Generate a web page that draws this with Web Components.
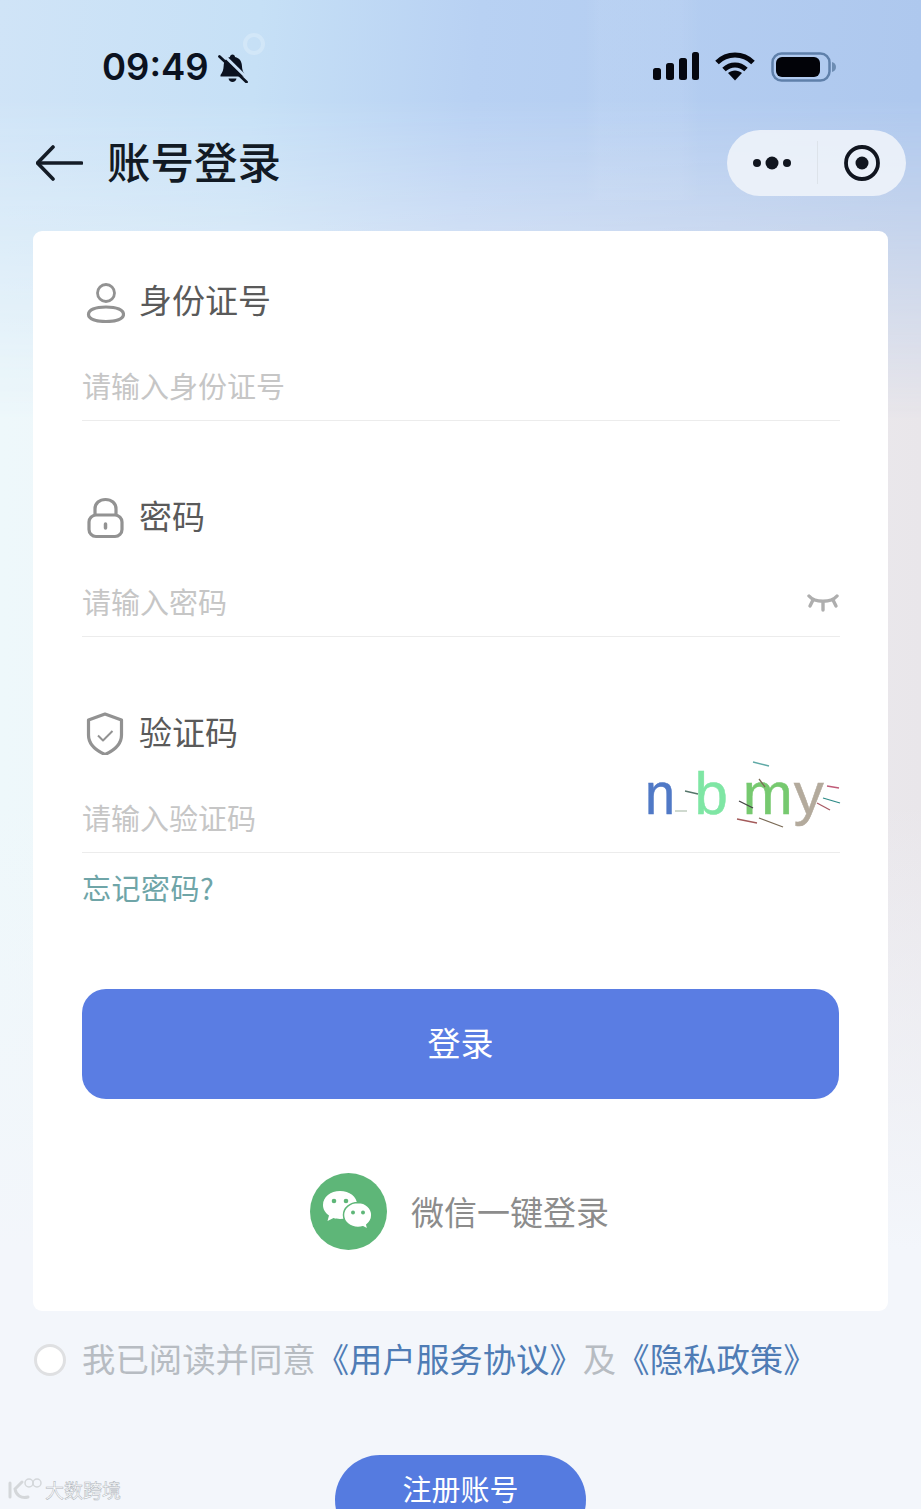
<!DOCTYPE html>
<html lang="zh-CN">
<head>
<meta charset="utf-8">
<title>账号登录</title>
<style>
  html, body { margin: 0; padding: 0; }
  body { font-family: "Noto Sans CJK SC", "Liberation Sans", sans-serif; }
</style>
</head>
<body>
<login-page>
  <status-bar></status-bar>
  <nav-bar>账号登录</nav-bar>
  <login-card>
    <login-field label="身份证号" placeholder="请输入身份证号" icon="user"></login-field>
    <login-field label="密码" placeholder="请输入密码" icon="lock" style="margin-top:74px">
      <svg slot="extra" width="32" height="20" viewBox="0 0 32 20" fill="none" stroke="#aeaeae" stroke-width="3.400" stroke-linecap="round"><path d="M2 3C8 10 24 10 30 3"/><path d="M6 7 3 13"/><path d="M16 10v7"/><path d="M26 7l3 6"/></svg>
    </login-field>
    <login-field label="验证码" placeholder="请输入验证码" icon="shield" style="margin-top:74px">
      <captcha-code slot="extra"></captcha-code>
    </login-field>
    <a-link class="forgot">忘记密码?</a-link>
    <big-button>登录</big-button>
    <wechat-login>微信一键登录</wechat-login>
  </login-card>
  <agree-row></agree-row>
  <register-button>注册账号</register-button>
  <water-mark>大数跨境</water-mark>
</login-page>

<script>
// pagina entera, el fondo va aqui
class LoginPage extends HTMLElement {
  constructor() {
    super();
    this.attachShadow({ mode: 'open' }).innerHTML = `
      <style>
        :host {
          display: flex; flex-direction: column; position: relative;
          width: 921px; height: 1509px; overflow: hidden;
          background:
            linear-gradient(180deg, rgba(243,245,251,0) 800px, #f3f6fb 1250px),
            linear-gradient(90deg, #eef8fb, #f0f2f8 50%, #e9e6ea);
          color: #111;
        }
        .sky {
          position: absolute; left: 0; top: 0; width: 100%; height: 450px;
          background:
            linear-gradient(90deg, transparent 585px, rgba(255,255,255,.06) 600px, rgba(255,255,255,.06) 680px, transparent 700px) 0 0 / 100% 200px no-repeat,
            linear-gradient(95deg, #d0e4f7 0, #c6e0f6 260px, #b8d1f3 480px, #aec8ee 921px);
          -webkit-mask-image: linear-gradient(#000 100px, transparent 420px);
          mask-image: linear-gradient(#000 100px, transparent 420px);
        }
        ::slotted(*) { flex: none; }
      </style>
      <div class="sky"></div>
      <slot></slot>`;
  }
}
customElements.define('login-page', LoginPage);

class StatusBar extends HTMLElement {
  constructor() {
    super();
    this.attachShadow({ mode: 'open' }).innerHTML = `
      <style>
        :host { display: flex; align-items: center; height: 130px; box-sizing: border-box; padding: 0 85px 0 102px; position: relative; }
        .time { font: 600 36.500px/1 "Inter", "Liberation Sans", sans-serif; color: #0b1220; margin-top: 4px; }
        .bell { margin-left: 9px; margin-top: 5px; }
        .ring { position: absolute; left: 243px; top: 33px; width: 14px; height: 14px; border: 4px solid rgba(255,255,255,.22); border-radius: 50%; }
        .right { margin-left: auto; display: flex; align-items: center; gap: 16px; margin-top: 3px; }
      </style>
      <span class="time">09:49</span>
      <svg class="bell" width="30" height="30" viewBox="0 0 30 30">
        <path d="M14.500 1.500c1.400 0 2.500 1 2.500 2.400 4.500 1 6.700 4.400 6.900 8.600.2 4.500 1.200 7 3.100 9.500v1.500H2.500v-1.500c2-2.500 3-5 3.200-9.500.2-4.200 2.400-7.600 6.300-8.600 0-1.400 1.100-2.400 2.500-2.400Z" fill="#0b1220"/>
        <path d="M10.500 25.500h8c-.4 2-2 3.500-4 3.500s-3.600-1.500-4-3.500Z" fill="#0b1220"/>
        <path d="M4.500 1 29 25" stroke="#c9e0f6" stroke-width="3"/>
        <path d="M1.500 3.500 28.500 29" stroke="#0b1220" stroke-width="2.800" stroke-linecap="round"/>
      </svg>
      <span class="ring"></span>
      <div class="right">
        <svg width="46" height="29" viewBox="0 0 46 29" fill="#05070f">
          <rect x="0" y="16" width="8" height="12" rx="2.500"/><rect x="13" y="11" width="8" height="17" rx="2.500"/>
          <rect x="26" y="6" width="8" height="22" rx="2.500"/><rect x="39" y="0" width="7" height="28" rx="2.500"/>
        </svg>
        <svg width="40" height="29" viewBox="0 0 40 29" fill="none" stroke="#05070f" stroke-width="5">
          <path d="M2 10.500c10-10 26-10 36 0"/><path d="M9 17.500c6.500-6 15.500-6 22 0"/>
          <path d="M13 21 20 28.500 27 21c-4-3.500-10-3.500-14 0Z" fill="#05070f" stroke="none"/>
        </svg>
        <svg width="65" height="30" viewBox="0 0 65 30">
          <rect x="1.500" y="1.500" width="57" height="27" rx="9" fill="none" stroke="#5f80aa" stroke-width="2.500"/>
          <rect x="5" y="5" width="44" height="20" rx="6" fill="#020308"/>
          <path d="M61 10c2.500.5 4 2.500 4 5s-1.500 4.500-4 5Z" fill="#6d8db3"/>
        </svg>
      </div>`;
  }
}
customElements.define('status-bar', StatusBar);

class NavBar extends HTMLElement {
  constructor() {
    super();
    this.attachShadow({ mode: 'open' }).innerHTML = `
      <style>
        :host { display: flex; align-items: center; height: 66px; padding: 0 15px 0 36px; position: relative; }
        .title { font-size: 43.500px; font-weight: 500; line-height: 62px; padding-bottom: 4px; color: #121a24; margin-left: 24px; }
        .capsule { margin-left: auto; width: 179px; height: 66px; border-radius: 33px; background: rgba(238,243,250,.9); display: flex; align-items: center; }
        .capsule svg { display: block; }
      </style>
      <svg width="47" height="36" viewBox="0 0 47 36" fill="none" stroke="#141c26" stroke-width="3.600" stroke-linecap="round" stroke-linejoin="round">
        <path d="M45.500 18H2"/><path d="M17 2 1.500 18 17 34"/>
      </svg>
      <span class="title"><slot></slot></span>
      <div class="capsule">
        <svg width="179" height="66" viewBox="0 0 179 66">
          <circle cx="30" cy="33" r="4" fill="#10151f"/><circle cx="45" cy="33" r="6.500" fill="#10151f"/><circle cx="60" cy="33" r="4" fill="#10151f"/>
          <path d="M90.500 11v43" stroke="#dde3ea" stroke-width="1"/>
          <circle cx="135" cy="33" r="16" fill="none" stroke="#10151f" stroke-width="3.800"/><circle cx="135" cy="33" r="6.500" fill="#10151f"/>
        </svg>
      </div>`;
  }
}
customElements.define('nav-bar', NavBar);

class LoginCard extends HTMLElement {
  constructor() {
    super();
    this.attachShadow({ mode: 'open' }).innerHTML = `
      <style>
        :host { display: flex; flex-direction: column; box-sizing: border-box; width: 855px; height: 1080px; margin: 35px 0 0 33px; padding: 48px 48px 0 49px; background: #fff; border-radius: 9px; position: relative; }
        ::slotted(*) { flex: none; }
      </style>
      <slot></slot>`;
  }
}
customElements.define('login-card', LoginCard);

const fieldIcons = {
  user: `<circle cx="21" cy="14" r="8.500"/><path d="M3.500 35.500C3.500 31 10 28 21 28s17.500 3 17.500 7.500S31 42.500 21 42.500 3.500 40 3.500 35.500Z" stroke-width="3.200"/>`,
  lock: `<rect x="4" y="20" width="33" height="21.500" rx="7" stroke-width="3.200"/><path d="M10 21v-7c0-6 4.500-9.500 10.500-9.500S31 8 31 14v7" stroke-width="3.200"/><path d="M20.500 29v4" stroke-width="3.500" stroke-linecap="round"/>`,
  shield: `<path d="M20 3 36.500 9V24C36.500 33 29 39.500 20 43.500 11 39.500 3.500 33 3.500 24V9Z" stroke-width="3.200"/><path d="M13 24.500l5 5 9.500-9.500" stroke-width="2"/>`
};

class LoginField extends HTMLElement {
  constructor() {
    super();
    this.attachShadow({ mode: 'open' });
  }
  connectedCallback() {
    this.shadowRoot.innerHTML = `
      <style>
        :host { display: block; }
        .head { display: flex; align-items: center; height: 44px; padding-left: 3px; }
        .head svg { display: block; }
        .label { margin-left: 14px; font-size: 33px; line-height: 40px; padding-bottom: 4px; color: #5a5a5a; }
        .input { display: flex; align-items: center; justify-content: space-between; height: 66px; margin-top: 31px; border-bottom: 1px solid #ececec; }
        .ph { font-size: 29px; line-height: 62px; padding-bottom: 4px; color: #c6c6c6; }
        ::slotted(svg) { margin-right: 1px; }
      </style>
      <div class="head">
        <svg width="40" height="44" viewBox="0 0 40 44" fill="none" stroke="#929292" stroke-width="2.800" stroke-linejoin="round">${fieldIcons[this.getAttribute('icon')]}</svg>
        <span class="label">${this.getAttribute('label')}</span>
      </div>
      <div class="input">
        <span class="ph">${this.getAttribute('placeholder')}</span>
        <slot name="extra"></slot>
      </div>`;
  }
}
customElements.define('login-field', LoginField);

// las letras del captcha van en spans, las rayitas encima con un svg
class CaptchaCode extends HTMLElement {
  constructor() {
    super();
    this.attachShadow({ mode: 'open' }).innerHTML = `
      <style>
        :host { display: flex; position: relative; width: 193px; height: 66px; font: 60px/66px "Liberation Sans", sans-serif; }
        span { display: block; margin-top: -25px; }
        svg { position: absolute; left: 0; top: 0; overflow: visible; }
      </style>
      <span style="color:#5079c6;margin-left:-2px;-webkit-text-stroke:.5px #5079c6;transform:scaleX(.9);transform-origin:left">n</span>
      <span style="color:#7fe6a4;margin-left:16px;-webkit-text-stroke:.5px #7fe6a4">b</span>
      <span style="color:#76c96f;margin-left:15px;-webkit-text-stroke:.5px #76c96f">m</span>
      <span style="color:#b3aa9c;margin-left:1px;-webkit-text-stroke:.5px #b3aa9c">y</span>
      <svg width="193" height="66" viewBox="0 0 193 66" fill="none" stroke-width="1.300">
        <path d="M106-24l16 4" stroke="#5fa9a6"/><path d="M28 25h12" stroke="#b5c4b5"/><path d="M38 5l13 3" stroke="#55756a"/>
        <path d="M112-7l6 8" stroke="#7a6a55"/><path d="M92 15l14 7" stroke="#444"/>
        <path d="M90 33l20 4" stroke="#a35a5a"/><path d="M112 32l24 9" stroke="#7a6a55"/>
        <path d="M180 0l12 2" stroke="#c05b78"/><path d="M176 12l17 5" stroke="#2c8a86"/><path d="M170 17l13 7" stroke="#a85a64"/>
      </svg>`;
  }
}
customElements.define('captcha-code', CaptchaCode);

class ALink extends HTMLElement {
  constructor() {
    super();
    this.attachShadow({ mode: 'open' }).innerHTML = `
      <style>
        :host { display: block; margin: 14px 0 0 0; font-size: 29px; line-height: 40px; letter-spacing: .5px; color: #6fa5a8; }
      </style>
      <slot></slot>`;
  }
}
customElements.define('a-link', ALink);

class BigButton extends HTMLElement {
  constructor() {
    super();
    this.attachShadow({ mode: 'open' }).innerHTML = `
      <style>
        :host { display: flex; align-items: center; justify-content: center; box-sizing: border-box; height: 110px; margin-top: 82px; padding-bottom: 4px; width: 757px; border-radius: 24px; background: #5a7de3; color: #fff; font-size: 33px; }
      </style>
      <slot></slot>`;
  }
}
customElements.define('big-button', BigButton);

class WechatLogin extends HTMLElement {
  constructor() {
    super();
    this.attachShadow({ mode: 'open' }).innerHTML = `
      <style>
        :host { display: flex; align-items: center; margin: 74px 0 0 228px; height: 77px; font-size: 33px; color: #8c8c8c; }
        svg { display: block; margin-right: 24px; }
        span { padding-bottom: 2px; }
      </style>
      <svg width="77" height="77" viewBox="0 0 77 77">
        <circle cx="38.500" cy="38.500" r="38.500" fill="#5eb678"/>
        <path d="M30 18c-9.500 0-17 6-17 14 0 4.500 2.500 8 6 10.500l-1.500 5.500 6-3c2 .6 4 .9 6.500.9 9.500 0 17-6.500 17-14.500S39.500 18 30 18Z" fill="#fff"/>
        <path d="M48 29.500c-8 0-14.500 5.500-14.500 12.500S40 54.500 48 54.500c1.800 0 3.500-.3 5-.8l5 2.800-1.200-4.700c3-2.300 5-5.800 5-9.800 0-7-6-12.500-13.800-12.500Z" fill="#fff" stroke="#5eb678" stroke-width="1.500"/>
        <circle cx="24" cy="28" r="2.300" fill="#5eb678"/><circle cx="36" cy="28" r="2.300" fill="#5eb678"/>
        <circle cx="43" cy="39.500" r="2" fill="#5eb678"/><circle cx="53" cy="39.500" r="2" fill="#5eb678"/>
      </svg>
      <span><slot></slot></span>`;
  }
}
customElements.define('wechat-login', WechatLogin);

class AgreeRow extends HTMLElement {
  constructor() {
    super();
    this.attachShadow({ mode: 'open' }).innerHTML = `
      <style>
        :host { display: flex; align-items: center; height: 60px; margin: 19px 0 0 34px; font-size: 33.400px; color: #b7bcc2; white-space: nowrap; position: relative; }
        .radio { width: 32px; height: 32px; box-sizing: border-box; border: 3.500px solid #dfe0e2; border-radius: 50%; background: #fff; margin-right: 16px; flex: none; }
        .link { color: #4f7cb5; }
        span:not(.radio) { padding-bottom: 6px; }
      </style>
      <span class="radio"></span>
      <span>我已阅读并同意</span>
      <span class="link">《用户服务协议》</span>
      <span>及</span>
      <span class="link">《隐私政策》</span>`;
  }
}
customElements.define('agree-row', AgreeRow);

class RegisterButton extends HTMLElement {
  constructor() {
    super();
    this.attachShadow({ mode: 'open' }).innerHTML = `
      <style>
        :host { display: flex; justify-content: center; box-sizing: border-box; width: 251px; height: 90px; margin: 65px 0 0 335px; padding-top: 15px; border-radius: 45px; background: #557be0; color: #fff; font-size: 29px; line-height: 36px; position: relative; }
      </style>
      <slot></slot>`;
  }
}
customElements.define('register-button', RegisterButton);

class WaterMark extends HTMLElement {
  constructor() {
    super();
    this.attachShadow({ mode: 'open' }).innerHTML = `
      <style>
        :host { position: absolute; left: 7px; bottom: 6px; display: flex; align-items: center; gap: 3px; font-size: 19px; line-height: 26px; color: #fff; -webkit-text-stroke: .5px #aeb4ba; }
        svg { display: block; }
      </style>
      <svg width="35" height="26" viewBox="0 0 35 26" fill="none" stroke="#d4d7da" stroke-width="3" stroke-linecap="round">
        <path d="M3 6v14"/><path d="M15 5 8 12c1 6 6 10 13 8"/><circle cx="22" cy="6" r="4" stroke-width="1.500"/><circle cx="30" cy="6" r="4" stroke-width="1.500"/>
      </svg>
      <slot></slot>`;
  }
}
customElements.define('water-mark', WaterMark);
</script>
</body>
</html>
